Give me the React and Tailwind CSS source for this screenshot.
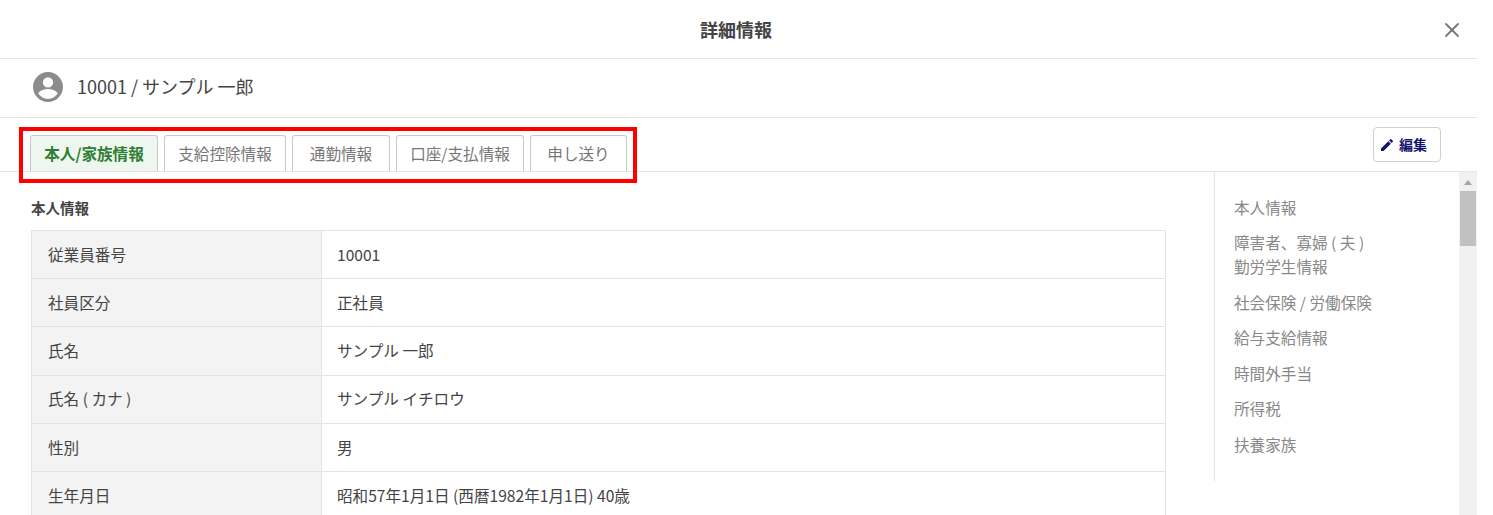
import { X } from "lucide-react";

const TABS = [
  { label: "本人/家族情報", active: true, width: "w-[128px]" },
  { label: "支給控除情報", width: "w-[122px]" },
  { label: "通勤情報", width: "w-[98px]" },
  { label: "口座/支払情報", width: "w-[128px]" },
  { label: "申し送り", width: "w-[97px]" },
];

const ROWS = [
  ["従業員番号", "10001"],
  ["社員区分", "正社員"],
  ["氏名", "サンプル 一郎"],
  ["氏名 ( カナ )", "サンプル イチロウ"],
  ["性別", "男"],
  ["生年月日", "昭和57年1月1日 (西暦1982年1月1日) 40歳"],
];

const NAV = [
  "本人情報",
  "障害者、寡婦 ( 夫 )\n勤労学生情報",
  "社会保険 / 労働保険",
  "給与支給情報",
  "時間外手当",
  "所得税",
  "扶養家族",
];

export default function App() {
  return (
    <div className="h-[515px] w-[1493px] overflow-hidden bg-white font-['Noto_Sans_CJK_JP','Noto_Sans',sans-serif] text-[#333]">
      <div className="w-[1477px]">

        {/* Header */}
        <div className="flex h-[59px] items-center justify-between border-b border-[#e4e4e4] pl-[700px] pr-[13px]">
          <h1 className="text-[18px] font-bold text-[#444]">詳細情報</h1>
          <X size={24} strokeWidth={1.8} className="mt-[2px] text-[#777]" />
        </div>

        {/* Employee */}
        <div className="flex h-[59px] items-center gap-[14px] border-b border-[#e4e4e4] pl-[33px]">
          <svg width="30" height="30" viewBox="0 0 24 24" fill="#8c8c8c" className="-mt-[2px]">
            <path d="M12 0C5.4 0 0 5.4 0 12s5.400 12 12 12 12-5.400 12-12S18.600 0 12 0zm0 4.200a4.100 4.100 0 1 1 0 8.200 4.100 4.100 0 0 1 0-8.200zm0 17.300c-3.200 0-6-1.600-7.700-4.100.1-2.500 5.100-3.900 7.700-3.900s7.600 1.400 7.700 3.900c-1.700 2.500-4.500 4.100-7.700 4.100z" />
          </svg>
          <span className="-mt-[4px] text-[18px] text-[#444]">10001 / サンプル 一郎</span>
        </div>

        {/* Tabs */}
        <div className="flex h-[54px] items-end justify-between border-b border-[#e4e4e4] pl-[30px] pr-[36px]">
          <div className="relative flex gap-[6px]">
            {TABS.map((t) => (
              <button
                key={t.label}
                className={`h-[36px] rounded-t-[3px] border border-b-0 border-[#c9c9c9] text-[15.6px] ${t.width} ${
                  t.active ? "bg-[#eef7ef] font-bold text-[#2e7d32]" : "bg-white text-[#777]"
                }`}
              >
                {t.label}
              </button>
            ))}
            <div className="absolute -left-[11px] -top-[8px] h-[56px] w-[618px] border-4 border-[#ff0000]" />
          </div>
          <button className="mb-[9px] flex h-[35px] w-[68px] items-center gap-[4px] rounded-[4px] border border-[#d0d0d0] bg-white pl-[5px] text-[14px] font-bold text-[#14146e]">
            <svg width="16" height="16" viewBox="0 0 24 24" fill="#14146e">
              <path d="M3 17.250V21h3.750L17.810 9.940l-3.750-3.750L3 17.250zM20.710 7.040a1 1 0 0 0 0-1.410l-2.340-2.340a1 1 0 0 0-1.410 0l-1.830 1.830 3.750 3.750 1.830-1.830z" />
            </svg>
            編集
          </button>
        </div>

        {/* Body */}
        <div className="flex h-[344px]">
          <div className="w-[1214px] pl-[31px]">
            <h2 className="mt-[26px] text-[14.5px] leading-[20px] font-bold text-[#444]">本人情報</h2>
            <table className="mt-[12px] w-[1135px] table-fixed border-collapse border border-[#e4e4e4] text-[15.6px] text-[#444]">
              <tbody>
                {ROWS.map(([k, v]) => (
                  <tr key={k} className="h-[48.2px] border-b border-[#e4e4e4]">
                    <th className="w-[290px] border-r border-[#e4e4e4] bg-[#f3f3f3] pl-[16px] text-left font-normal">{k}</th>
                    <td className="pl-[15px]">{v}</td>
                  </tr>
                ))}
              </tbody>
            </table>
          </div>

          {/* Side nav */}
          <div className="h-[309px] w-[245px] border-l border-[#e4e4e4] pl-[19px] pt-[22.7px]">
            <ul className="flex flex-col gap-[11.500px] text-[15.6px] leading-[24px] text-[#888]">
              {NAV.map((n) => (
                <li key={n} className="whitespace-pre-line">{n}</li>
              ))}
            </ul>
          </div>

          {/* Scrollbar */}
          <div className="flex w-[18px] flex-col items-center bg-[#f1f1f1]">
            <div className="mt-[8px] h-0 w-0 border-x-[4px] border-b-[5px] border-x-transparent border-b-[#a3a3a3]" />
            <div className="mt-[6px] h-[55px] w-[16px] bg-[#c1c1c1]" />
          </div>
        </div>
      </div>
    </div>
  );
}
